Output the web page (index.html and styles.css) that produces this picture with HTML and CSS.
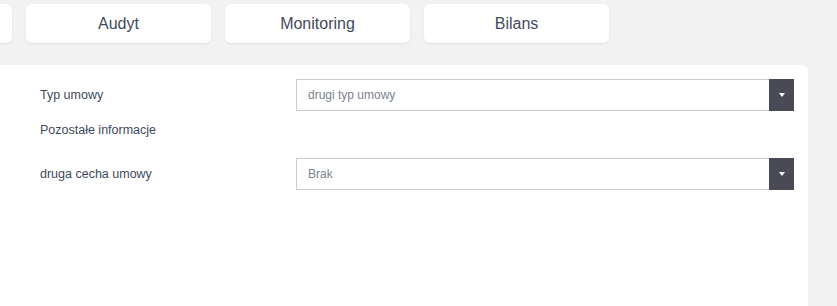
FILE: index.html
```html
<!DOCTYPE html>
<html lang="pl">

<head>
    <meta charset="UTF-8">
    <meta name="viewport" content="width=device-width, initial-scale=1.0">
    <title>Umowa</title>
    <link rel="stylesheet" href="styles.css">
</head>

<body>
    <div class="tabs">
        <button class="tab"></button>
        <button class="tab">Audyt</button>
        <button class="tab">Monitoring</button>
        <button class="tab">Bilans</button>
    </div>

    <div class="panel">
        <div class="form-row">
            <label class="form-label">Typ umowy</label>
            <div class="select">
                <span class="select-value">drugi typ umowy</span>
                <span class="select-btn"><span class="caret"></span></span>
            </div>
        </div>

        <div class="section-title">Pozostałe informacje</div>

        <div class="form-row">
            <label class="form-label">druga cecha umowy</label>
            <div class="select">
                <span class="select-value">Brak</span>
                <span class="select-btn"><span class="caret"></span></span>
            </div>
        </div>
    </div>
</body>

</html>
```

FILE: styles.css
```css
body {
    margin: 0;
    background-color: #f2f2f2;
    font-family: "Liberation Sans", Arial, sans-serif;
    overflow: hidden;
}

.tabs {
    display: flex;
    gap: 14px;
    margin-left: -173px;
    padding-top: 4px;
}

.tab {
    width: 185px;
    height: 39px;
    flex-shrink: 0;
    background-color: white;
    border: none;
    border-radius: 6px;
    box-shadow: 0 1px 2px rgba(0, 0, 0, 0.08);
    font-family: inherit;
    font-size: 16px;
    color: #3f4a5e;
}

.panel {
    box-sizing: border-box;
    width: 808px;
    height: 241px;
    margin-top: 22px;
    padding: 14px 14px 0 40px;
    background-color: white;
    border-radius: 0 6px 0 0;
}

.form-row {
    display: flex;
    align-items: center;
}

.form-label {
    width: 256px;
    font-size: 12.5px;
    color: #3d4a5c;
}

.select {
    flex: 1;
    display: flex;
    height: 32px;
    box-sizing: border-box;
    border: 1px solid #cccccc;
    border-right: none;
}

.select-value {
    flex: 1;
    padding-left: 11px;
    line-height: 30px;
    font-size: 12px;
    color: #7b8290;
}

.select-btn {
    width: 25px;
    margin-top: -1px;
    height: 32px;
    background-color: #4a4a56;
    display: flex;
    align-items: center;
    justify-content: center;
}

.caret {
    width: 0;
    height: 0;
    border-left: 3px solid transparent;
    border-right: 3px solid transparent;
    border-top: 4px solid white;
}

.section-title {
    height: 22px;
    line-height: 22px;
    margin: 8px 0 17px;
    font-size: 12.5px;
    color: #3d4a5c;
}
```
